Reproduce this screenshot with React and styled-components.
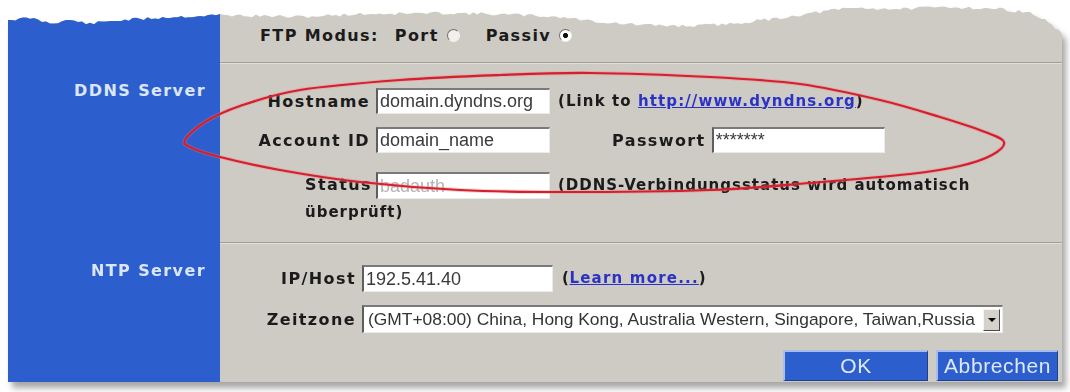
import React from "react";
import styled, { createGlobalStyle } from "styled-components";

const BLUE = "#2c5fcd";
const GRAY = "#cecbc4";

// ragged top edge of the torn screenshot (page coords)
const topAnchors = [
  [8, 20], [30, 18], [50, 23], [70, 20], [90, 24], [110, 21], [140, 19],
  [170, 17], [200, 16], [220, 15], [260, 16], [300, 17], [340, 15],
  [360, 14], [450, 13], [520, 15], [560, 17], [600, 22], [640, 25],
  [690, 26], [730, 24], [780, 18], [820, 12], [850, 8], [900, 9],
  [950, 7], [1000, 9], [1030, 13], [1045, 20], [1055, 28], [1062, 34],
];

const tornClip = () => {
  let seed = 11;
  const rnd = () => {
    seed = (seed * 9301 + 49297) % 233280;
    return seed / 233280;
  };
  const pts = [];
  for (let i = 0; i < topAnchors.length - 1; i++) {
    const [x0, y0] = topAnchors[i];
    const [x1, y1] = topAnchors[i + 1];
    const steps = Math.max(1, Math.round((x1 - x0) / 4));
    for (let s = 0; s < steps; s++) {
      const t = s / steps;
      const x = x0 + (x1 - x0) * t;
      const y = y0 + (y1 - y0) * t + (i === 0 && s === 0 ? 0 : (rnd() - 0.5) * 3.2);
      pts.push(`${(x - 8).toFixed(1)}px ${Math.max(0, y - 5).toFixed(1)}px`);
    }
  }
  pts.push(`100% ${34 - 5}px`, "100% 100%", "0 100%");
  return `polygon(${pts.join(", ")})`;
};

// hand drawn red ellipse around the DynDNS fields
const ring = [
  [185, 140], [205, 122], [240, 106], [300, 90], [400, 80], [500, 75],
  [590, 73], [710, 77], [800, 84], [880, 100], [940, 117], [985, 132],
  [1004, 142], [992, 155], [960, 166], [910, 174], [810, 183], [710, 190],
  [560, 192], [460, 190], [360, 182], [280, 170], [220, 157], [192, 148],
];

const smoothClosed = (p) => {
  const n = p.length;
  let d = `M${p[0][0]},${p[0][1]}`;
  for (let i = 0; i < n; i++) {
    const a = p[(i - 1 + n) % n];
    const b = p[i];
    const c = p[(i + 1) % n];
    const e = p[(i + 2) % n];
    const c1 = [b[0] + (c[0] - a[0]) / 6, b[1] + (c[1] - a[1]) / 6];
    const c2 = [c[0] - (e[0] - b[0]) / 6, c[1] - (e[1] - b[1]) / 6];
    d += ` C${c1[0].toFixed(1)},${c1[1].toFixed(1)} ${c2[0].toFixed(1)},${c2[1].toFixed(1)} ${c[0]},${c[1]}`;
  }
  return d + "Z";
};

const App = () => {
  return (
    <Page>
      <GlobalStyle />
      <Shadow>
        <Panel>
          <Side />
          <TopBar>
            <Label>FTP Modus:</Label>
            <Label $ml={16}>Port</Label>
            <Radio />
            <Label $ml={26}>Passiv</Label>
            <Radio $checked />
          </TopBar>

          <Side>
            <SideTitle>DDNS Server</SideTitle>
          </Side>
          <Area $divider $pt={25}>
            <FieldRow>
              <Label $w={150} $mr={6}>Hostname</Label>
              <TextField $w={174} readOnly value="domain.dyndns.org" />
              <Note $ml={8} $ls={1.1}>
                (Link to <Link href="#">http://www.dyndns.org</Link>)
              </Note>
            </FieldRow>
            <FieldRow $mt={13}>
              <Label $w={150} $mr={6}>Account ID</Label>
              <TextField $w={174} readOnly value="domain_name" />
              <Label $ml={62} $mr={6}>Passwort</Label>
              <TextField $w={173} readOnly value="*******" />
            </FieldRow>
            <StatusLine>
              <StatusLabel>Status</StatusLabel>
              <InlineField $w={174} $muted readOnly value="badauth" />
              (DDNS-Verbindungsstatus wird automatisch überprüft)
            </StatusLine>
          </Area>

          <Side>
            <SideTitle>NTP Server</SideTitle>
          </Side>
          <Area $divider $pt={22}>
            <FieldRow>
              <Label $w={136} $mr={6}>IP/Host</Label>
              <TextField $w={191} $h={27} readOnly value="192.5.41.40" />
              <Note $ml={9} $ls={0.6}>
                (<Link href="#" $ls={1.2}>Learn more...</Link>)
              </Note>
            </FieldRow>
            <FieldRow $mt={13}>
              <Label $w={136} $mr={6}>Zeitzone</Label>
              <Select>
                <SelectText>
                  (GMT+08:00) China, Hong Kong, Australia Western, Singapore, Taiwan,Russia
                </SelectText>
                <SelectArrow />
              </Select>
            </FieldRow>
            <Buttons>
              <Button $w={145}>OK</Button>
              <Button $w={122}>Abbrechen</Button>
            </Buttons>
          </Area>
        </Panel>
      </Shadow>
      <Annotation width="1070" height="392" viewBox="0 0 1070 392">
        <path d={smoothClosed(ring)} fill="none" stroke="#f07a80" strokeWidth="4" opacity="0.35" />
        <path d={smoothClosed(ring)} fill="none" stroke="#d41f2d" strokeWidth="2.2" />
      </Annotation>
    </Page>
  );
};

export default App;

// Styled Components

const GlobalStyle = createGlobalStyle`
  html, body {
    margin: 0;
    padding: 0;
    background: #ffffff;
  }
  body {
    width: 1070px;
    height: 392px;
    overflow: hidden;
    font-family: "DejaVu Sans", Verdana, sans-serif;
  }
`;

const Page = styled.div`
  position: relative;
  width: 1070px;
  height: 392px;
  padding: 5px 0 0 8px;
  box-sizing: border-box;
`;

const Shadow = styled.div`
  width: 1054px;
  height: 377px;
  filter: drop-shadow(4px 6px 3px rgba(0, 0, 0, 0.35));
`;

const Panel = styled.div`
  display: grid;
  grid-template-columns: 212px 1fr;
  grid-template-rows: 57px 180px 140px;
  width: 100%;
  height: 100%;
  background: ${GRAY};
  clip-path: ${tornClip()};
`;

const Side = styled.div`
  background: ${BLUE};
  display: flex;
  justify-content: flex-end;
  align-items: flex-start;
  padding: 19px 14px 0 0;
`;

const SideTitle = styled.div`
  font: bold 16px/19px "DejaVu Sans", Verdana, sans-serif;
  letter-spacing: 1.4px;
  color: #dbe6f8;
  white-space: nowrap;
`;

const TopBar = styled.div`
  display: flex;
  align-items: center;
  padding: 3px 0 0 40px;
`;

const Area = styled.div`
  display: flex;
  flex-direction: column;
  padding-top: ${(p) => p.$pt}px;
  border-top: ${(p) => (p.$divider ? "1px solid #a09e97" : "none")};
  box-shadow: inset 0 1px 0 #e2e0da;
`;

const FieldRow = styled.div`
  display: flex;
  align-items: center;
  margin-top: ${(p) => p.$mt || 0}px;
`;

const Label = styled.span`
  flex: none;
  width: ${(p) => (p.$w ? `${p.$w}px` : "auto")};
  margin-left: ${(p) => p.$ml || 0}px;
  margin-right: ${(p) => p.$mr || 0}px;
  text-align: right;
  font: bold 16px/19px "DejaVu Sans", Verdana, sans-serif;
  letter-spacing: 1.4px;
  color: #1b1b1b;
  white-space: nowrap;
`;

const Note = styled.span`
  margin-left: ${(p) => p.$ml || 0}px;
  font: bold 15px/19px "DejaVu Sans", Verdana, sans-serif;
  letter-spacing: ${(p) => p.$ls}px;
  color: #1b1b1b;
  white-space: nowrap;
`;

const Link = styled.a`
  color: #2b33c6;
  text-decoration: underline;
  letter-spacing: ${(p) => p.$ls || 1.1}px;
`;

const Radio = styled.span`
  flex: none;
  width: 11px;
  height: 11px;
  margin-left: 8px;
  border-radius: 50%;
  border: 1px solid;
  border-color: #6f6f6f #f2f2f2 #f2f2f2 #6f6f6f;
  background: ${(p) =>
    p.$checked
      ? "radial-gradient(circle, #111 0 2.2px, #ffffff 2.9px)"
      : "#f1f0ed"};
`;

const TextField = styled.input`
  flex: none;
  box-sizing: border-box;
  width: ${(p) => p.$w}px;
  height: ${(p) => p.$h || 26}px;
  margin: 0;
  padding: 0 0 0 2px;
  background: #ffffff;
  border-style: solid;
  border-width: 2px 1px 1px 2px;
  border-color: #7a7a7a #ebebeb #ebebeb #5e5e5e;
  font: 18px "Liberation Sans", Arial, sans-serif;
  color: ${(p) => (p.$muted ? "#b5b5b5" : "#3a3a3a")};
  outline: none;
`;

const StatusLine = styled.p`
  margin: 18px 60px 0 85px;
  font: bold 15px/27px "DejaVu Sans", Verdana, sans-serif;
  letter-spacing: 1px;
  color: #1b1b1b;
`;

const StatusLabel = styled.span`
  display: inline-block;
  width: 64px;
  text-align: right;
  font-size: 16px;
  letter-spacing: 1.4px;
`;

const InlineField = styled(TextField)`
  display: inline-block;
  height: 27px;
  margin: 0 8px 0 7px;
  vertical-align: middle;
  letter-spacing: 0;
`;

const Select = styled.div`
  flex: none;
  display: flex;
  align-items: center;
  box-sizing: border-box;
  width: 641px;
  height: 28px;
  padding-left: 4px;
  background: #ffffff;
  border-style: solid;
  border-width: 2px 1px 1px 2px;
  border-color: #7a7a7a #ebebeb #ebebeb #5e5e5e;
`;

const SelectText = styled.span`
  flex: 1;
  overflow: hidden;
  white-space: nowrap;
  font: 17.4px "Liberation Sans", Arial, sans-serif;
  color: #333333;
`;

const SelectArrow = styled.span`
  flex: none;
  display: flex;
  align-items: center;
  justify-content: center;
  box-sizing: border-box;
  width: 17px;
  height: 22px;
  margin-right: 2px;
  background: #d5d2cb;
  border: 1px solid;
  border-color: #f6f6f6 #4a4a4a #4a4a4a #f6f6f6;

  &::before {
    content: "";
    border-left: 4px solid transparent;
    border-right: 4px solid transparent;
    border-top: 4px solid #000000;
  }
`;

const Buttons = styled.div`
  display: flex;
  justify-content: flex-end;
  gap: 8px;
  margin-top: 17px;
  padding-right: 4px;
`;

const Button = styled.button`
  box-sizing: border-box;
  width: ${(p) => p.$w}px;
  height: 31px;
  padding: 0;
  background: ${BLUE};
  color: #dfe8f8;
  font: 21px "Liberation Sans", Arial, sans-serif;
  letter-spacing: 0.6px;
  border-style: solid;
  border-width: 2px 1px 1px 2px;
  border-color: #a7bdec #1d3f8e #1d3f8e #a7bdec;
  cursor: pointer;
`;

const Annotation = styled.svg`
  position: absolute;
  top: 0;
  left: 0;
  pointer-events: none;
`;
